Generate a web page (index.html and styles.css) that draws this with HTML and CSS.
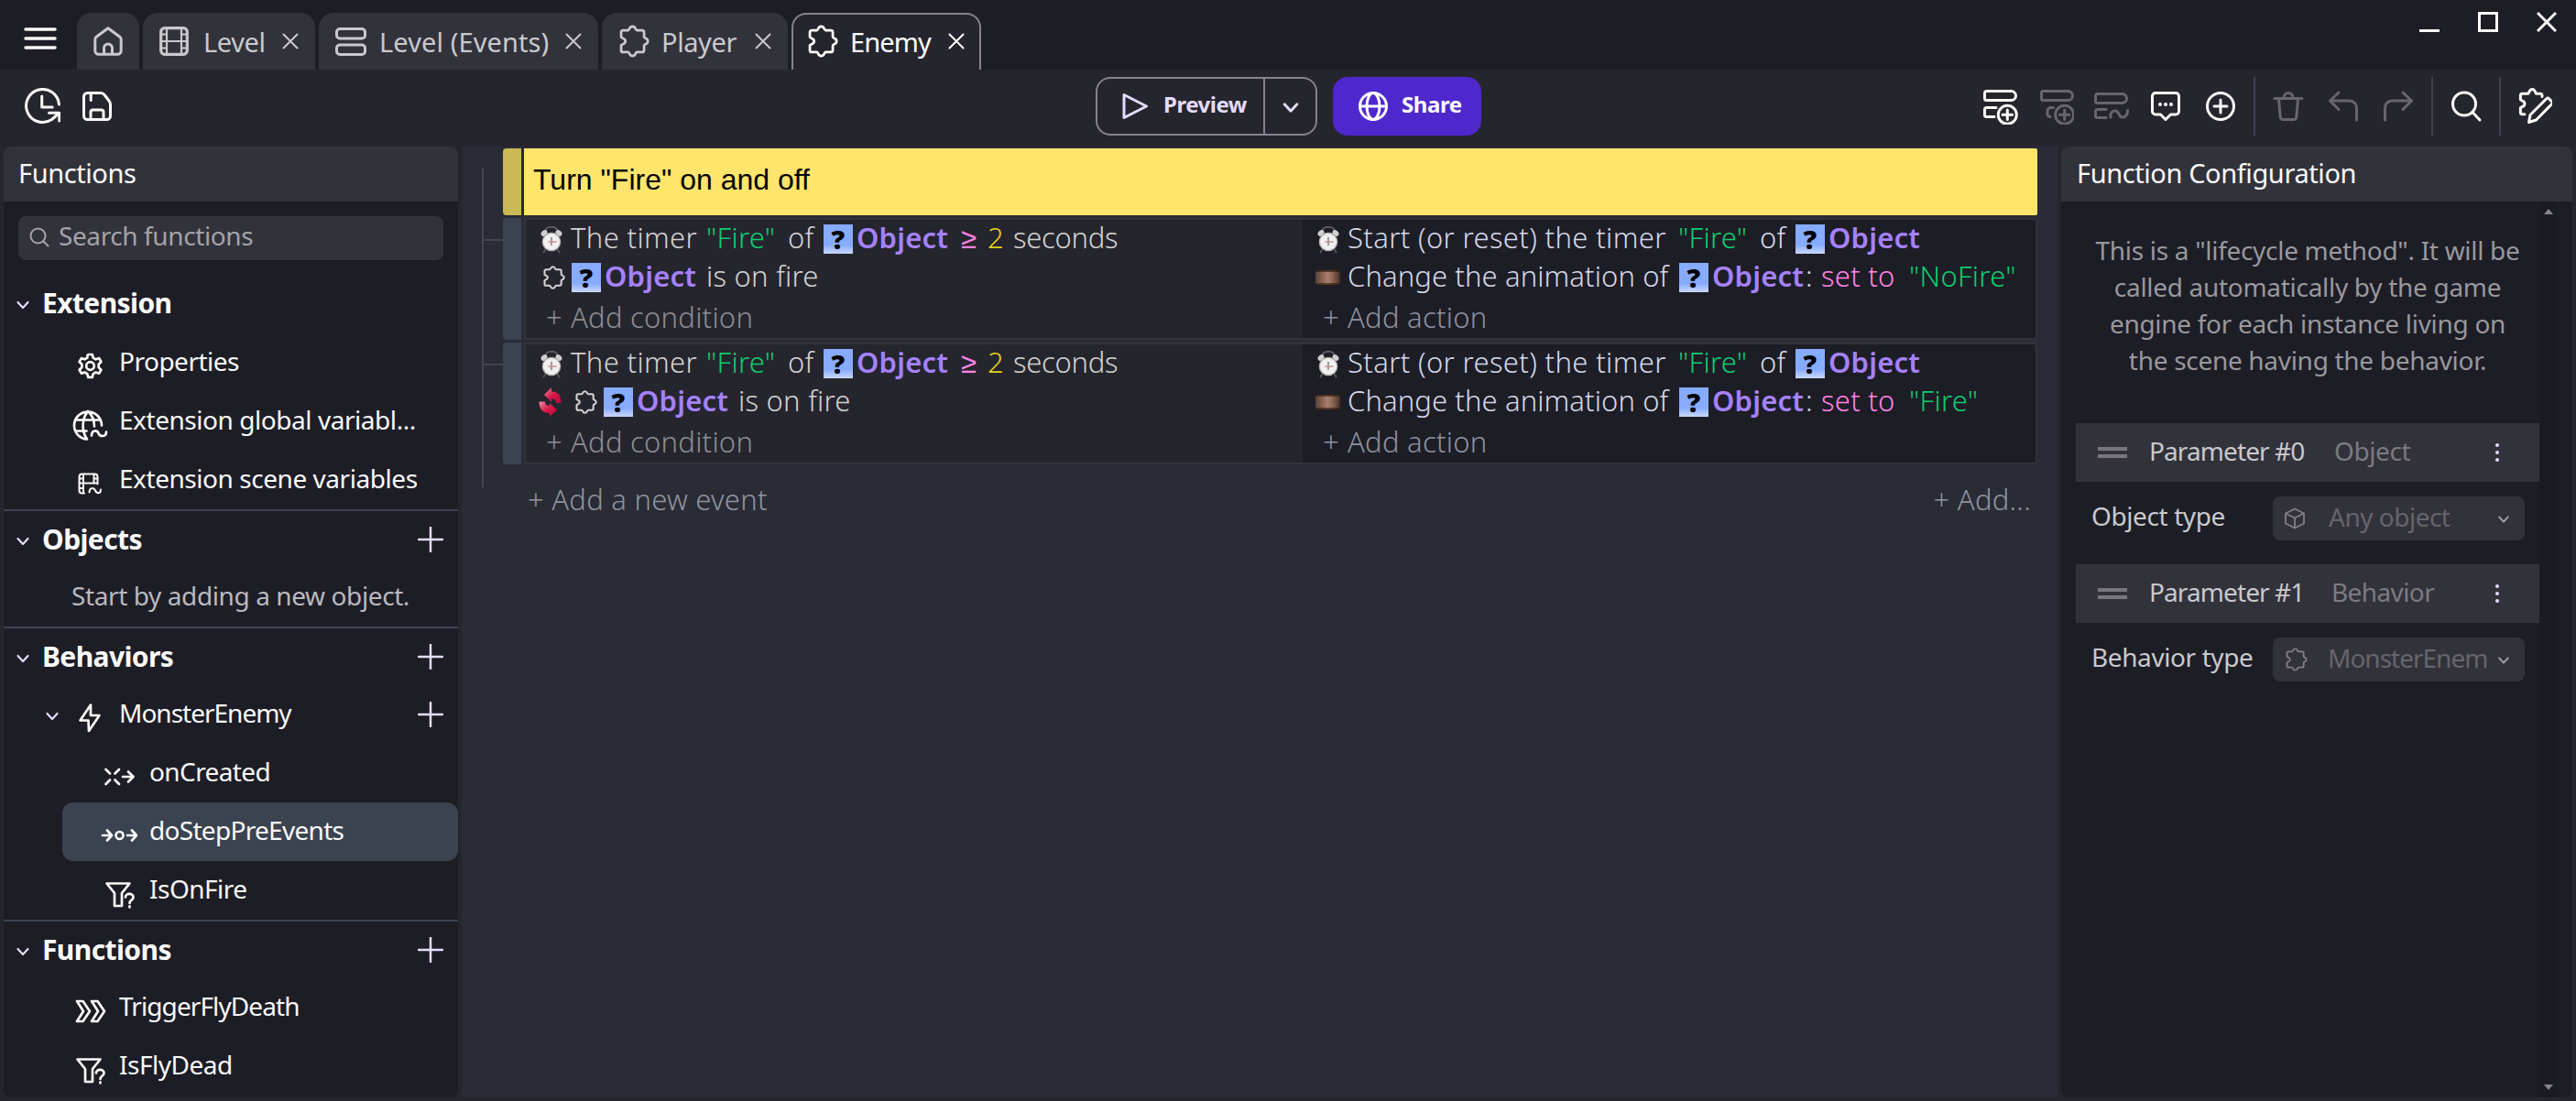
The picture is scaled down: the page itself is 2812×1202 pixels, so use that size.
FILE: index.html
```html
<!DOCTYPE html>
<html lang="en">
<head>
<meta charset="UTF-8">
<title>Enemy</title>
<link rel="stylesheet" href="styles.css">
</head>
<body>
<!-- shared icons -->
<svg class="defs">
    <defs>
        <linearGradient id="film-grad">
            <stop offset="0" stop-color="#5a4138"/>
            <stop offset=".3" stop-color="#8b6656"/>
            <stop offset=".5" stop-color="#ab7f6b"/>
            <stop offset=".7" stop-color="#8b6656"/>
            <stop offset="1" stop-color="#4a352d"/>
        </linearGradient>
        <linearGradient id="red-grad" x1="0" y1="0" x2="1" y2="1">
            <stop offset="0" stop-color="#f08aa8"/>
            <stop offset=".5" stop-color="#d81848"/>
            <stop offset="1" stop-color="#b8083a"/>
        </linearGradient>
    </defs>
    <symbol id="puzzle" viewBox="0 0 24 26">
        <path d="M1.5 9.8V5.8A1.5 1.5 0 0 1 3 4.3h3.900c1.500 0 .7-3 3.600-3s2.100 3 3.600 3H18A1.7 1.7 0 0 1 19.7 6v3.600c0 1.400 3 .6 3 3.400s-3 2-3 3.400V20a1.7 1.7 0 0 1-1.7 1.7h-3.900c-1.500 0-.7 3-3.600 3s-2.100-3-3.600-3H3a1.5 1.5 0 0 1-1.5-1.5v-4c0-.8 3.400-.6 3.400-3.200s-3.400-2.400-3.400-3.200z"/>
    </symbol>
    <symbol id="cross" viewBox="0 0 18 18"><path d="M1.5 1.5l15 15M16.500 1.5l-15 15"/></symbol>
    <symbol id="chevron" viewBox="0 0 16 12"><path d="M2.500 3l5.500 6 5.500-6"/></symbol>
    <symbol id="plus" viewBox="0 0 28 28"><path d="M14 1v26M1 14h26"/></symbol>
    <symbol id="filter" viewBox="0 0 34 30">
        <path d="M2.500 2.500h25l-8.500 10.500v14h-8v-14z"/>
        <path d="M23 17.500c0-5 8.500-4.500 8.500 0 0 3-4 3-4 6.500M27.500 27.300v1.200"/>
    </symbol>
    <symbol id="clock" viewBox="0 0 26 32">
        <path d="M6.500 9C4 .5 22 .5 19.500 9" fill="none" stroke="#5c5c63" stroke-width="2"/>
        <ellipse cx="5" cy="9.500" rx="3.800" ry="2.800" fill="#cfcfcf" transform="rotate(-40 5 9.500)"/>
        <ellipse cx="21" cy="9.500" rx="3.800" ry="2.800" fill="#cfcfcf" transform="rotate(40 21 9.500)"/>
        <path d="M6 28l-1.500 2.500M20 28l1.500 2.500" stroke="#55555c" stroke-width="2"/>
        <circle cx="13" cy="19" r="10.300" fill="#b4b4b4"/>
        <circle cx="13" cy="19" r="9" fill="#f1efef"/>
        <path d="M13 14.500v8" stroke="#888" stroke-width="1.600"/>
        <path d="M10 19h8" stroke="#c99090" stroke-width="1.500"/>
    </symbol>
    <symbol id="film" viewBox="0 0 28 18">
        <rect width="28" height="18" rx="2" fill="#2a1c18"/>
        <rect y="1.500" width="26.500" height="15" rx="1.500" fill="url(#film-grad)"/>
        <path d="M1 2.200h25M1 15.800h25" stroke="#2a1c18" stroke-width="1.300" stroke-dasharray="1.500 1.500"/>
    </symbol>
    <symbol id="invert" viewBox="0 0 28 32">
        <path d="M7 8L15 0v4.500c6 0 11 3 10.500 12.500h-5.500c0-3-1-4.500-5-4.500V16z" fill="url(#red-grad)"/>
        <path d="M21 24.500L13 32v-4C7 28 1.500 25 1.500 15.500H8c0 3 1 4 5 4.500V17z" fill="url(#red-grad)"/>
    </symbol>
</svg>

<div class="titlebar">
    <svg class="menu" viewBox="0 0 36 24"><path d="M2 2h32M2 12h32M2 22h32"/></svg>
    <div class="tabs">
        <div class="tab tab-home">
            <svg class="icon-32" viewBox="0 0 32 32"><path d="M1.800 14.200a4 4 0 0 1 1.400-3L16 1.800l12.800 9.400a4 4 0 0 1 1.400 3V26.500a3.700 3.700 0 0 1-3.700 3.700h-21a3.700 3.700 0 0 1-3.700-3.700zM11.500 30v-6.500a4.500 4.500 0 0 1 9 0V30"/></svg>
        </div>
        <div class="tab tab-level">
            <svg class="icon-32" viewBox="0 0 32 32"><rect x="1.700" y="1.700" width="28.600" height="28.600" rx="4"/><path d="M8 2v28M24 2v28M8 16h16M2 8.500h6M2 16h6M2 23.500h6M24 8.500h6M24 16h6M24 23.500h6"/></svg>
            <span>Level</span>
            <svg class="close"><use href="#cross"/></svg>
        </div>
        <div class="tab tab-events">
            <svg class="icon-34" viewBox="0 0 34 32"><rect x="1.500" y="2.500" width="31" height="10.500" rx="3.500"/><rect x="1.500" y="20" width="31" height="10.500" rx="3.500"/></svg>
            <span>Level (Events)</span>
            <svg class="close"><use href="#cross"/></svg>
        </div>
        <div class="tab tab-player">
            <svg class="icon-puzzle"><use href="#puzzle"/></svg>
            <span>Player</span>
            <svg class="close"><use href="#cross"/></svg>
        </div>
        <div class="tab tab-enemy active">
            <svg class="icon-puzzle"><use href="#puzzle"/></svg>
            <span>Enemy</span>
            <svg class="close"><use href="#cross"/></svg>
        </div>
    </div>
    <div class="window-buttons">
        <svg viewBox="0 0 22 22"><path d="M0 20.500h22"/></svg>
        <svg viewBox="0 0 22 22"><path d="M1.500 1.500h19v19h-19z"/></svg>
        <svg viewBox="0 0 22 22"><path d="M1 1l20 20M21 1L1 21"/></svg>
    </div>
</div>

<div class="toolbar">
    <div class="toolbar-left">
        <svg viewBox="0 0 40 40"><path d="M38.500 18A18 18 0 1 0 30.500 34.500L38 28M27.500 27.300H38.800V36M19.700 9v12h11.500"/></svg>
        <svg viewBox="0 0 40 40"><path d="M5.500 9.500a4 4 0 0 1 4-4h14.500c2 0 3 .8 4 2l5 6.500a7 7 0 0 1 1.500 4v12.500a4 4 0 0 1-4 4h-21a4 4 0 0 1-4-4zM13 34v-7.500a2.500 2.500 0 0 1 2.500-2.500h9a2.500 2.500 0 0 1 2.500 2.500V34M13.200 6v7.500"/></svg>
    </div>
    <div class="preview">
        <div class="preview-main">
            <svg class="play" viewBox="0 0 30 30"><path d="M3 2.500v25L27.500 15z"/></svg>
            <span>Preview</span>
        </div>
        <div class="preview-more"><svg class="chev-big"><use href="#chevron"/></svg></div>
    </div>
    <div class="share">
        <svg class="icon-32" viewBox="0 0 32 32"><circle cx="16" cy="16" r="14.500"/><ellipse cx="16" cy="16" rx="7" ry="14.500"/><path d="M1.500 16h29"/></svg>
        <span>Share</span>
    </div>
    <div class="toolbar-right">
        <svg viewBox="0 0 40 40"><path d="M4.500 3.500h27a4.500 4.500 0 0 1 0 10h-27a2 2 0 0 1-2-2v-6a2 2 0 0 1 2-2zM15 21.500H4.500a2 2 0 0 0-2 2v6a2 2 0 0 0 2 2H13"/><circle cx="27.300" cy="29.300" r="10"/><path d="M27.300 24v10.600M22 29.300h10.600"/></svg>
        <svg class="off" viewBox="0 0 40 40"><path d="M6.500 3.500h27a4.500 4.500 0 0 1 0 10h-27a2 2 0 0 1-2-2v-6a2 2 0 0 1 2-2zM17.500 21.500h-3a3.500 3.500 0 0 0-3.500 3.500v3a3.500 3.500 0 0 0 3 3.500"/><circle cx="29.700" cy="29.300" r="10"/><path d="M29.700 24v10.600M24.400 29.300h10.600"/></svg>
        <svg class="off" viewBox="0 0 40 40"><path d="M5.500 6.500h27a4.500 4.500 0 0 1 0 10h-27a2 2 0 0 1-2-2v-6a2 2 0 0 1 2-2zM15 23.500H5.500a2 2 0 0 0-2 2v5a2 2 0 0 0 2 2H15M20 32v-2c0-6 7-6.500 9-1.500 2.500 6 9.500 4 9.500-4"/></svg>
        <svg viewBox="0 0 40 40"><path d="M9 5.500h22a3.500 3.500 0 0 1 3.500 3.500v16.500a3.500 3.500 0 0 1-3.500 3.500h-5.500l-5.500 5.500-5.500-5.500H9a3.500 3.500 0 0 1-3.500-3.500V9A3.500 3.500 0 0 1 9 5.500z"/><path class="dots" d="M14 18h.01M20 18h.01M26 18h.01"/></svg>
        <svg viewBox="0 0 40 40"><circle cx="20" cy="20" r="14.500"/><path d="M20 13v14M13 20h14"/></svg>
        <i class="sep"></i>
        <svg class="off" viewBox="0 0 40 40"><path d="M5 11.500h30M9.500 12l1.700 19.500a3 3 0 0 0 3 3h11.600a3 3 0 0 0 3-3L30.500 12M15 11c0-7.500 10-7.500 10 0"/></svg>
        <svg class="off" viewBox="0 0 40 40"><path d="M15 5L5.500 14l9.500 9.500M6 14h21a7.500 7.500 0 0 1 7.500 7.500V35"/></svg>
        <svg class="off" viewBox="0 0 40 40"><path d="M25 5l9.500 9-9.500 9.500M34 14H13a7.500 7.500 0 0 0-7.500 7.500V35"/></svg>
        <i class="sep"></i>
        <svg viewBox="0 0 40 40"><circle cx="18" cy="17.500" r="12.500"/><path d="M27 26.500l8 8.500"/></svg>
        <i class="sep"></i>
        <svg viewBox="-3 0 40 40"><path d="M26 9.500V8.300a2 2 0 0 0-2-2h-4.500c-.8 0-.6-4.800-4.300-4.800s-3.500 4.800-4.300 4.800H4.400a2 2 0 0 0-2 2v4.500c0 .9 4.600.8 4.600 4.500s-4.600 3.500-4.600 4.400v5a2 2 0 0 0 2 2h2.500M11.500 37.500l1.500-8L31 11.500c.8-.8 1.600-.6 2.300.1l3.500 3.500c.8.8.6 1.500 0 2.200L19.500 35z"/></svg>
    </div>
</div>

<div class="main">
    <div class="panel functions">
        <div class="panel-title title-functions">Functions</div>
        <div class="search">
            <svg viewBox="0 0 22 22"><circle cx="9.500" cy="9.500" r="8"/><path d="M15.500 15.500l5 5"/></svg>
            <span>Search functions</span>
        </div>
        <div class="tree">
            <div class="head first"><svg class="chev"><use href="#chevron"/></svg><b>Extension</b></div>
            <div class="row">
                <svg class="ico" viewBox="0 0 40 36"><path d="M17.500 6l.7-1h4.600l.9 3.700 2.800 1.600 3.700-1.200 2.200 3.900-2.700 2.700v3.400l2.700 2.600-2.200 3.900-3.700-1.100-2.800 1.600-.9 3.800h-4.600l-.9-3.800-2.800-1.600-3.600 1.100-2.300-3.900 2.800-2.600v-3.400l-2.800-2.700 2.300-3.900 3.600 1.200 2.800-1.600z"/><circle cx="20.500" cy="17.500" r="4.300"/></svg>
                <span class="t-prop">Properties</span>
            </div>
            <div class="row">
                <svg class="ico" viewBox="0 0 40 36"><path d="M33 18.500A15 15 0 1 0 17 33.500M18 3c-7 8-7 22-1 30.500M18 3c5 4.500 7 10 7 16.500M4.500 12.500h27M4.500 24.500h12M22 29.500c0-6 6-6.500 7.500-2.500s8.500 4.500 8.500-1.500"/></svg>
                <span class="t-var">Extension global variabl...</span>
            </div>
            <div class="row">
                <svg class="ico thin" viewBox="0 0 40 36"><path d="M14 28.500h-2.500a3 3 0 0 1-3-3v-15a3 3 0 0 1 3-3h14a3 3 0 0 1 3 3v8M13 8v20M24.500 8v9M13 17.500h15M8.500 12.500H13M8.500 17.500H13M8.500 23H13M24.500 12.500h4M19.500 27.500c0-5.500 5-5.500 6.500-2s6 4 6-1"/></svg>
                <span class="t-var">Extension scene variables</span>
            </div>
            <div class="head"><svg class="chev"><use href="#chevron"/></svg><b>Objects</b><svg class="add"><use href="#plus"/></svg></div>
            <div class="row empty"><span>Start by adding a new object.</span></div>
            <div class="head"><svg class="chev"><use href="#chevron"/></svg><b>Behaviors</b><svg class="add"><use href="#plus"/></svg></div>
            <div class="row behavior">
                <svg class="chev"><use href="#chevron"/></svg>
                <svg class="ico" viewBox="0 0 40 36"><path d="M21 3.500L9.500 20.500h9l.5 11.500 11.500-17h-9.500z"/></svg>
                <span class="t-monster">MonsterEnemy</span>
                <svg class="add"><use href="#plus"/></svg>
            </div>
            <div class="row sub">
                <svg class="ico" viewBox="0 0 40 36"><path d="M5.500 10l4.500 4.500M5.500 26l4.500-4.500M20 10l-4.500 4.500M20 26l-4.500-4.500M24 18h11M30 12.500l5.500 5.500-5.500 5.500"/></svg>
                <span class="t-created">onCreated</span>
            </div>
            <div class="row sub selected">
                <svg class="ico" viewBox="0 0 40 36"><path d="M2 18h9M7 12.500l5 5.500-5 5.500M29 18h9M34 12.500l5 5.500-5 5.500"/><circle cx="20.500" cy="18" r="4"/></svg>
                <span class="t-step">doStepPreEvents</span>
            </div>
            <div class="row sub">
                <svg class="ico filter"><use href="#filter"/></svg>
                <span class="t-is">IsOnFire</span>
            </div>
            <div class="head"><svg class="chev"><use href="#chevron"/></svg><b>Functions</b><svg class="add"><use href="#plus"/></svg></div>
            <div class="row">
                <svg class="ico" viewBox="0 0 40 36"><path d="M6 7h6.500L20 18l-7.500 11H6l7-11zM22 7h6.500L36 18l-7.500 11H22l7-11z"/></svg>
                <span class="t-trigger">TriggerFlyDeath</span>
            </div>
            <div class="row">
                <svg class="ico filter"><use href="#filter"/></svg>
                <span class="t-is">IsFlyDead</span>
            </div>
        </div>
    </div>

    <div class="sheet">
        <div class="rail"><i></i><i></i></div>
        <div class="events">
            <div class="event comment">
                <div class="handle"></div>
                <div class="comment-text">Turn "Fire" on and off</div>
            </div>
            <div class="event">
                <div class="handle"></div>
                <div class="body">
                    <div class="conditions">
                        <div class="line">
                            <svg class="clock"><use href="#clock"/></svg>
                            <span class="w-timer">The timer</span><span class="string">"Fire"</span><span class="w-of">of</span><em>?</em><span class="object">Object</span><span class="op">≥</span><span class="num">2</span><span class="w-sec">seconds</span>
                        </div>
                        <div class="line second">
                            <svg class="small-puzzle"><use href="#puzzle"/></svg>
                            <em>?</em><span class="object near">Object</span><span>is on fire</span>
                        </div>
                        <div class="line add-line"><span class="w-plus">+</span><span>Add condition</span></div>
                    </div>
                    <div class="actions">
                        <div class="line">
                            <svg class="clock"><use href="#clock"/></svg>
                            <span class="w-start">Start (or reset) the timer</span><span class="string">"Fire"</span><span class="w-of">of</span><em>?</em><span class="object">Object</span>
                        </div>
                        <div class="line second">
                            <svg class="film"><use href="#film"/></svg>
                            <span class="w-change">Change the animation of</span><em>?</em><span class="object colon">Object</span><span class="w-colon">:</span><span class="op set">set to</span><span class="string">"NoFire"</span>
                        </div>
                        <div class="line add-line"><span class="w-plus">+</span><span>Add action</span></div>
                    </div>
                </div>
            </div>
            <div class="event">
                <div class="handle"></div>
                <div class="body">
                    <div class="conditions">
                        <div class="line">
                            <svg class="clock"><use href="#clock"/></svg>
                            <span class="w-timer">The timer</span><span class="string">"Fire"</span><span class="w-of">of</span><em>?</em><span class="object">Object</span><span class="op">≥</span><span class="num">2</span><span class="w-sec">seconds</span>
                        </div>
                        <div class="line second">
                            <svg class="invert"><use href="#invert"/></svg>
                            <svg class="small-puzzle"><use href="#puzzle"/></svg>
                            <em>?</em><span class="object near">Object</span><span>is on fire</span>
                        </div>
                        <div class="line add-line"><span class="w-plus">+</span><span>Add condition</span></div>
                    </div>
                    <div class="actions">
                        <div class="line">
                            <svg class="clock"><use href="#clock"/></svg>
                            <span class="w-start">Start (or reset) the timer</span><span class="string">"Fire"</span><span class="w-of">of</span><em>?</em><span class="object">Object</span>
                        </div>
                        <div class="line second">
                            <svg class="film"><use href="#film"/></svg>
                            <span class="w-change">Change the animation of</span><em>?</em><span class="object colon">Object</span><span class="w-colon">:</span><span class="op set">set to</span><span class="string">"Fire"</span>
                        </div>
                        <div class="line add-line"><span class="w-plus">+</span><span>Add action</span></div>
                    </div>
                </div>
            </div>
            <div class="sheet-footer"><span>+ Add a new event</span><span>+ Add...</span></div>
        </div>
    </div>

    <div class="panel config">
        <div class="panel-title title-config">Function Configuration</div>
        <div class="config-body">
            <div class="config-content">
                <p>This is a "lifecycle method". It will be<br>called automatically by the game<br>engine for each instance living on<br>the scene having the behavior.</p>
                <div class="param">
                    <i class="grip"></i>
                    <span class="p-name">Parameter #0</span>
                    <span class="p-type">Object</span>
                    <svg class="more" viewBox="0 0 6 22"><path d="M3 3h.01M3 11h.01M3 19h.01"/></svg>
                </div>
                <div class="field">
                    <label class="l-object">Object type</label>
                    <div class="select">
                        <svg class="cube" viewBox="0 0 24 24"><path d="M12 1.500l10 5v11l-10 5-10-5v-11zM2 6.500l10 5 10-5M12 11.500v11"/></svg>
                        <span class="s-any">Any object</span>
                        <svg class="chev"><use href="#chevron"/></svg>
                    </div>
                </div>
                <div class="param">
                    <i class="grip"></i>
                    <span class="p-name">Parameter #1</span>
                    <span class="p-type type-behavior">Behavior</span>
                    <svg class="more" viewBox="0 0 6 22"><path d="M3 3h.01M3 11h.01M3 19h.01"/></svg>
                </div>
                <div class="field">
                    <label>Behavior type</label>
                    <div class="select">
                        <svg class="select-puzzle"><use href="#puzzle"/></svg>
                        <span class="s-monster">MonsterEnem</span>
                        <svg class="chev"><use href="#chevron"/></svg>
                    </div>
                </div>
            </div>
            <div class="scrollbar">
                <svg viewBox="0 0 10 6"><path d="M5 0l5 6H0z"/></svg>
                <svg viewBox="0 0 10 6"><path d="M5 6l5-6H0z"/></svg>
            </div>
        </div>
    </div>
</div>
</body>
</html>
```
FILE: styles.css
```css
* {
    box-sizing: border-box;
}
body {
    margin: 0;
    width: 2812px;
    height: 1202px;
    overflow: hidden;
    display: flex;
    flex-direction: column;
    background: #25252e;
    color: #fafafa;
    font-family: "Noto Sans", sans-serif;
    font-size: 28px;
    letter-spacing: -0.4px;
    white-space: nowrap;
}
svg {
    fill: none;
    stroke: currentColor;
    stroke-width: 3;
    stroke-linecap: round;
    stroke-linejoin: round;
    flex: none;
}
.defs {
    position: absolute;
    width: 0;
    height: 0;
}
.icon-32 { width: 32px; height: 32px; }
.icon-34 { width: 34px; height: 32px; }

/* title bar */
.titlebar {
    height: 76px;
    flex: none;
    display: flex;
    background: #1d1d26;
}
.menu {
    width: 36px;
    height: 24px;
    margin: 30px 22px 0 26px;
    stroke-width: 3.5;
}
.tabs {
    display: flex;
    gap: 4px;
    padding-top: 14px;
}
.tab {
    height: 62px;
    display: flex;
    align-items: center;
    padding: 0 18px;
    border-radius: 16px 16px 0 0;
    background: #32323b;
    color: #c9c9cd;
    font-size: 29px;
}
.tab .icon-32 { stroke-width: 3; }
.tab .close {
    width: 18px;
    height: 18px;
    margin-left: auto;
    stroke-width: 2;
}
.tab .icon-puzzle {
    width: 33px;
    height: 36px;
    stroke-width: 2;
}
.tab-home { width: 68px; }
.tab-level { width: 188px; }
.tab-level span { margin-left: 16px; }
.tab-level rect { stroke-width: 3.2; }
.tab-level path { stroke-width: 2.2; }
.tab-events { width: 305px; }
.tab-events span { margin-left: 14px; letter-spacing: 0.1px; }
.tab-player { width: 203px; padding-left: 19px; }
.tab-player span { margin-left: 13px; }
.tab-enemy { width: 207px; padding-left: 16px; }
.tab-enemy span { margin-left: 13px; letter-spacing: -0.9px; }
.tab.active {
    background: #25252e;
    border: 2px solid #85858b;
    border-bottom: 0;
    color: #fff;
    padding-right: 16px;
    padding-bottom: 2px;
}
.window-buttons {
    display: flex;
    gap: 42px;
    margin: 13px 21px 0 auto;
}
.window-buttons svg {
    width: 22px;
    height: 22px;
    stroke-linecap: butt;
    stroke-linejoin: miter;
}

/* toolbar */
.toolbar {
    height: 84px;
    flex: none;
    display: flex;
    padding-top: 8px;
}
.toolbar-left {
    display: flex;
    gap: 20px;
    width: 1170px;
    margin: 12px 0 0 26px;
}
.toolbar-left svg { width: 40px; height: 40px; }
.preview {
    width: 242px;
    height: 64px;
    display: flex;
    border: 2px solid #85838f;
    border-radius: 16px;
    color: #e4dcff;
    font-size: 24px;
    font-weight: bold;
    letter-spacing: -0.5px;
}
.preview-main {
    width: 183px;
    display: flex;
    align-items: center;
    gap: 16px;
    padding-left: 26px;
    border-right: 2px solid #85838f;
}
.preview-main span, .share span { padding-bottom: 5px; }
.play { width: 30px; height: 30px; }
.preview-more {
    flex: 1;
    display: flex;
    align-items: center;
    justify-content: center;
    padding-top: 3px;
}
.chev-big { width: 20px; height: 15px; stroke-width: 2.3; }
.share {
    width: 162px;
    height: 64px;
    margin-left: 17px;
    padding-left: 28px;
    display: flex;
    align-items: center;
    gap: 15px;
    border-radius: 16px;
    background: #4f28cd;
    color: #fff;
    font-size: 24px;
    font-weight: bold;
    letter-spacing: -0.4px;
}
.toolbar-right {
    display: flex;
    align-items: center;
    height: 64px;
    margin-left: auto;
    padding-right: 16px;
}
.toolbar-right svg {
    width: 40px;
    height: 40px;
    margin: 0 10px;
}
.toolbar-right .off { color: #66666c; }
.toolbar-right .dots { stroke-width: 4; }
.sep {
    width: 2px;
    height: 64px;
    margin: 0 6px;
    background: #3c4350;
}

/* panels */
.main {
    flex: none;
    height: 1038px;
    display: grid;
    grid-template-columns: 496px 1742px 558px;
    gap: 4px;
    padding: 0 4px;
}
.panel {
    background: #1d1d26;
    border-radius: 8px;
    overflow: hidden;
}
.panel-title {
    height: 60px;
    line-height: 58px;
    padding-left: 16px;
    background: #32323b;
    font-size: 29px;
}
.search {
    height: 48px;
    margin: 16px;
    display: flex;
    gap: 10px;
    padding: 12px 12px 0;
    border-radius: 8px;
    background: #32323b;
    color: #a3a3a8;
    line-height: 18px;
    letter-spacing: -0.4px;
}
.search svg {
    width: 22px;
    height: 22px;
    stroke-width: 2;
}
.head {
    height: 64px;
    display: flex;
    align-items: center;
    padding: 0 16px 0 13px;
    border-top: 2px solid #3c4350;
    font-size: 30px;
    letter-spacing: -0.6px;
}
.head.first {
    border: 0;
    padding-bottom: 2px;
}
.chev {
    width: 16px;
    height: 12px;
    margin-top: 3px;
    color: #e4dcff;
    stroke-width: 2.2;
}
.head b {
    margin-left: 13px;
    padding-bottom: 2px;
}
.add {
    width: 28px;
    height: 28px;
    margin-left: auto;
    color: #e4dcff;
    stroke-width: 2.5;
}
.row {
    height: 64px;
    display: flex;
    align-items: center;
    padding: 0 16px 0 74px;
    font-size: 28px;
}
.row span { padding-bottom: 4px; }
.ico {
    width: 40px;
    height: 36px;
    margin: 7px 12px 0 0;
    stroke-width: 2.7;
}
.ico.thin { stroke-width: 2; }
.ico.filter {
    width: 34px;
    height: 30px;
    margin: 9px 14px 0 4px;
}
.row.empty { color: #b9b9be; }
.row.behavior { padding-left: 45px; }
.behavior .chev { margin-right: 13px; }
.row.sub {
    margin-left: 64px;
    padding-left: 42px;
    border-radius: 12px;
}
.sub .ico { margin-right: 13px; }
.sub .ico.filter { margin-right: 15px; }
.row.selected { background: #3c4350; }
.t-prop { letter-spacing: -0.5px; }
.t-var { letter-spacing: -0.45px; }
.t-monster { letter-spacing: -1px; }
.t-created { letter-spacing: -0.6px; }
.t-step { letter-spacing: -0.7px; }
.t-trigger { letter-spacing: -0.9px; }
.t-is { letter-spacing: -0.5px; }

/* events sheet */
.sheet {
    background: #292b35;
    display: flex;
    font-size: 31px;
    font-weight: 340;
    letter-spacing: 0.25px;
}
.rail {
    width: 23px;
    height: 348px;
    margin: 24px 0 0 22px;
    border-left: 2px solid #43444d;
    padding-top: 77px;
}
.rail i {
    display: block;
    height: 2px;
    margin-bottom: 134px;
    background: #43444d;
}
.rail i + i { margin-bottom: 0; }
.events {
    width: 1675px;
    padding-top: 2px;
}
.event {
    display: flex;
    gap: 3px;
    margin-bottom: 3px;
}
.handle {
    width: 20px;
    border-radius: 4px 0 0 4px;
    background: #3c4350;
}
.comment .handle { background: #cab955; }
.comment-text {
    flex: 1;
    height: 73px;
    padding: 15px 10px;
    border-radius: 0 2px 2px 0;
    background: #ffe56c;
    color: #000;
    font: 32px/38px "Liberation Sans", Arial, sans-serif;
    letter-spacing: 0;
}
.body {
    flex: 1;
    height: 133px;
    display: grid;
    grid-template-columns: 848px 1fr;
    border: 2px solid #32333b;
    border-radius: 0 4px 4px 0;
}
.conditions {
    background: #25252e;
    color: #d2d2d2;
    padding-left: 12px;
}
.actions {
    background: #1d1d26;
    color: #d4d8e6;
    padding-left: 12px;
}
.line {
    height: 41px;
    display: flex;
    align-items: center;
}
.line.second { height: 43px; }
.line span {
    padding-bottom: 3px;
    flex: none;
}
.line.second span { padding-bottom: 4px; }
.clock {
    width: 26px;
    height: 32px;
    margin: 0 8px 0 3px;
}
.clock, .film, .invert { stroke: none; }
.film {
    width: 28px;
    height: 18px;
    margin: 0 7px 0 2px;
}
.invert {
    width: 28px;
    height: 32px;
    margin: 0 13px 0 1px;
}
.small-puzzle {
    width: 24px;
    height: 26px;
    margin: 0 7px;
    stroke-width: 2.1;
}
.invert + .small-puzzle { margin-left: 0; }
.line em {
    width: 32px;
    height: 32px;
    margin-right: 4px;
    background: linear-gradient(#86abff 70%, #a9c2ff 85%, #c9d8ff);
    color: #000;
    font: 900 29px/31px "Noto Sans", sans-serif;
    text-align: center;
}
.w-timer { width: 148px; letter-spacing: 0.35px; }
.string { width: 89px; color: #10ca70; }
.w-of { width: 39px; }
.object {
    width: 114px;
    color: #a582ff;
    font-weight: 600;
    letter-spacing: 0.2px;
}
.object.near { width: 111px; }
.object.colon { width: 102px; }
.op { width: 29px; color: #ff82e2; }
.num { width: 28px; color: #e2d01c; }
.w-sec { letter-spacing: -0.3px; }
.w-start { width: 361px; letter-spacing: 0.35px; }
.w-change { width: 362px; letter-spacing: 0.1px; }
.w-colon { width: 17px; }
.op.set { width: 96px; }
.add-line {
    height: 45px;
    padding-left: 10px;
    color: #8d8d92;
}
.actions .add-line { color: #8e919e; }
.line.add-line span { padding-bottom: 1px; }
.w-plus { width: 27px; }
.sheet-footer {
    display: flex;
    justify-content: space-between;
    margin-top: 17px;
    padding: 0 7px 0 27px;
    color: #8f939f;
}

/* function configuration */
.title-config { padding-left: 17px; }
.config-body {
    height: 978px;
    display: flex;
}
.config-content {
    width: 522px;
    padding: 33px 0 0 16px;
}
.config-content p {
    margin: 0 0 49px;
    line-height: 40px;
    text-align: center;
    color: #98989d;
    letter-spacing: -0.3px;
}
.param {
    height: 64px;
    display: flex;
    align-items: center;
    padding: 0 43px 0 24px;
    background: #32323b;
}
.param span { padding-bottom: 5px; }
.grip {
    width: 32px;
    height: 12px;
    border: solid #77777c;
    border-width: 4px 0;
}
.p-name {
    width: 202px;
    margin-left: 24px;
    color: #c9c9cd;
    letter-spacing: -0.9px;
}
.p-type { color: #7b7b81; }
.type-behavior {
    margin-left: -3px;
    letter-spacing: -0.6px;
}
.more {
    width: 6px;
    height: 22px;
    margin-left: auto;
    color: #e4dcff;
    stroke-width: 4;
}
.field {
    height: 90px;
    display: flex;
    align-items: flex-start;
    justify-content: space-between;
    padding: 16px 16px 0 17px;
    color: #c9c9cd;
}
.field label { line-height: 42px; }
.select {
    width: 275px;
    height: 48px;
    display: flex;
    align-items: center;
    padding: 0 16px 0 12px;
    border-radius: 8px;
    background: #32323b;
    color: #65656b;
}
.select span { padding-bottom: 5px; }
.cube {
    width: 24px;
    height: 24px;
    margin-right: 25px;
    stroke-width: 1.8;
    color: #808085;
}
.select-puzzle {
    width: 24px;
    height: 26px;
    margin: 0 22px 0 2px;
    stroke-width: 1.8;
    color: #808085;
}
.select .chev {
    width: 14px;
    margin: 1px 0 0 auto;
    color: #a0a3ad;
}
.s-any { letter-spacing: -0.5px; }
.s-monster { letter-spacing: -1px; }
.scrollbar {
    width: 20px;
    display: flex;
    flex-direction: column;
    justify-content: space-between;
    align-items: center;
    padding: 8px 0;
    background: #1b1b24;
}
.scrollbar svg {
    width: 10px;
    height: 6px;
    fill: #85858b;
    stroke: none;
}
```
